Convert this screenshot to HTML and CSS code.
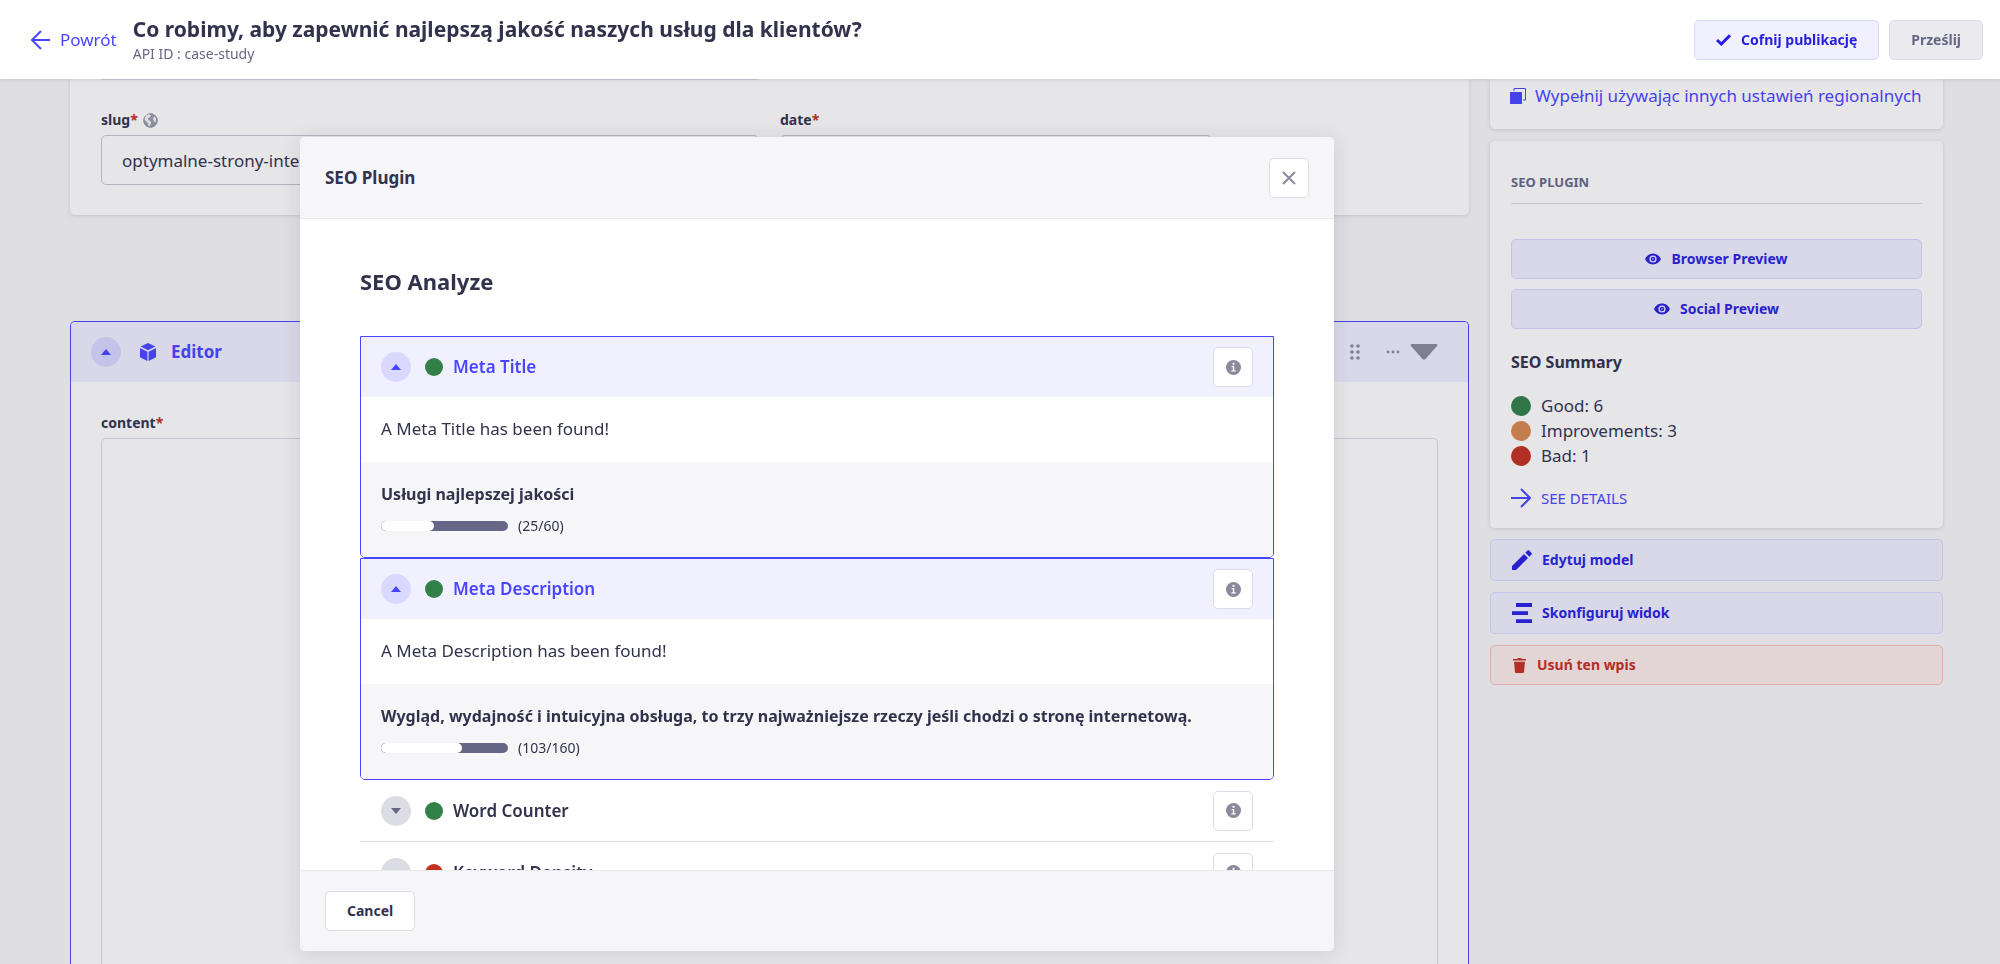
FILE: index.html
```html
<!DOCTYPE html>
<html lang="pl">
<head>
<meta charset="utf-8">
<meta name="viewport" content="width=device-width, initial-scale=1">
<title>Co robimy, aby zapewnić najlepszą jakość naszych usług dla klientów?</title>
<link rel="stylesheet" href="styles.css">
</head>
<body>
<svg class="sprite" aria-hidden="true">
  <symbol id="i-info" viewBox="0 0 16 16"><circle cx="8" cy="8" r="8" fill="#8a8a9c"/><g fill="#fff"><circle cx="8" cy="4" r="1.2"/><path d="M6 6.3h2.8v4.5h1.6v1.5H5.7v-1.5h1.6v-3H6z"/></g></symbol>
  <symbol id="i-eye" viewBox="0 0 16 12"><path fill="currentColor" fill-rule="evenodd" d="M8 0.6C4.4.6 1.400 2.800.1 6c1.300 3.200 4.300 5.400 7.900 5.400s6.600-2.200 7.900-5.400C14.600 2.800 11.600.6 8 .6zM8 9.600a3.600 3.600 0 1 1 0-7.200 3.600 3.600 0 0 1 0 7.200z"/><path fill="currentColor" fill-rule="evenodd" d="M8 3.700a2.300 2.300 0 1 0 0 4.600 2.300 2.300 0 0 0 0-4.600zm0 1.500a.8.8 0 1 1 0 1.600.8.8 0 0 1 0-1.600z"/></symbol>
  <symbol id="i-up" viewBox="0 0 10 6"><path fill="currentColor" d="M0 6 5 0l5 6z"/></symbol>
  <symbol id="i-down" viewBox="0 0 10 6"><path fill="currentColor" d="M0 0h10L5 6z"/></symbol>
</svg>

<header class="topbar">
  <a class="back" href="#"><svg width="20" height="20" viewBox="0 0 20 20" fill="none" stroke="currentColor" stroke-width="2"><path d="M20 10H2M11 1l-9 9 9 9"/></svg>Powrót</a>
  <div class="heading">
    <h1>Co robimy, aby zapewnić najlepszą jakość naszych usług dla klientów?</h1>
    <p>API ID : case-study</p>
  </div>
  <div class="topbar-actions">
    <button class="btn btn-soft" type="button"><svg width="15" height="12" viewBox="0 0 15 12" fill="none" stroke="currentColor" stroke-width="3"><path d="m1 6 4.300 4L14 1.300"/></svg>Cofnij publikację</button>
    <button class="btn btn-disabled" type="button" disabled>Prześlij</button>
  </div>
</header>

<main class="page">
  <div class="main-col">
    <section class="card fields">
      <div class="field-stub"></div>
      <div class="field-row">
        <div class="field">
          <label for="slug">slug<i>*</i><svg width="15" height="15" viewBox="0 0 15 15"><circle cx="7.500" cy="7.500" r="6.800" fill="#9a9aac" stroke="#8a8a9c"/><path fill="#f4f4f8" d="m3 2.300 3-1 2 1-1 2-2 1 .5 2 2 .6.600 2-1.600 3.400-1-.3-.5-3L2.600 8 1.500 6zM11 3l2 2.500-.3 4-1.700-1-1-2.500z"/></svg></label>
          <input id="slug" type="text" value="optymalne-strony-internetowe">
        </div>
        <div class="field field-date">
          <label for="date">date<i>*</i></label>
          <input id="date" type="text">
        </div>
      </div>
    </section>
    <section class="editor">
      <div class="editor-head">
        <button class="toggle" type="button" aria-label="Zwiń"><svg width="10" height="6"><use href="#i-up"/></svg></button>
        <svg width="16" height="18" viewBox="0 0 16 18"><path fill="currentColor" d="M8 0l7.300 3.600L8 7.200.7 3.600zM0 5l7.400 3.700V18L0 14.300zM16 5 8.600 8.700V18L16 14.300z"/></svg>
        <h2>Editor</h2>
        <div class="editor-tools">
          <svg width="10" height="16" viewBox="0 0 10 16" fill="currentColor"><circle cx="2" cy="2" r="1.800"/><circle cx="8" cy="2" r="1.800"/><circle cx="2" cy="8" r="1.800"/><circle cx="8" cy="8" r="1.800"/><circle cx="2" cy="14" r="1.800"/><circle cx="8" cy="14" r="1.800"/></svg>
          <svg class="dots" width="14" height="4" viewBox="0 0 14 4" fill="currentColor"><circle cx="2" cy="2" r="1.400"/><circle cx="7" cy="2" r="1.400"/><circle cx="12" cy="2" r="1.400"/></svg>
          <svg width="28" height="16" viewBox="0 0 28 16" fill="currentColor"><path d="M2 0h24q2 0 1 2L15.500 15q-1.500 1.500-3 0L1 2Q0 0 2 0z"/></svg>
        </div>
      </div>
      <div class="editor-body">
        <label for="content">content<i>*</i></label>
        <textarea id="content"></textarea>
      </div>
    </section>
  </div>

  <aside class="side-col">
    <section class="card locales">
      <a href="#"><svg width="16" height="16" viewBox="0 0 16 16"><path fill="currentColor" d="M0 4h12v12H0z"/><path fill="none" stroke="currentColor" d="M4 3V.5h11.500v11.500H13"/></svg>Wypełnij używając innych ustawień regionalnych</a>
    </section>
    <section class="card seo">
      <h2>SEO PLUGIN</h2>
      <button class="btn btn-soft" type="button"><svg width="16" height="12"><use href="#i-eye"/></svg>Browser Preview</button>
      <button class="btn btn-soft" type="button"><svg width="16" height="12"><use href="#i-eye"/></svg>Social Preview</button>
      <h3>SEO Summary</h3>
      <ul>
        <li><span class="disc good"></span>Good: 6</li>
        <li><span class="disc warn"></span>Improvements: 3</li>
        <li><span class="disc bad"></span>Bad: 1</li>
      </ul>
      <a class="details" href="#"><svg width="20" height="20" viewBox="0 0 20 20" fill="none" stroke="currentColor" stroke-width="2"><path d="M0 10h19M10 1l9 9-9 9"/></svg>SEE DETAILS</a>
    </section>
    <button class="btn btn-soft btn-wide" type="button"><svg width="20" height="20" viewBox="0 0 20 20" fill="currentColor"><path d="M0 16 12 4l4 4L4 20H0zM13.300 2.700 15.500.5q.8-.8 1.600 0l2.400 2.400q.8.800 0 1.600l-2.200 2.200z"/></svg>Edytuj model</button>
    <button class="btn btn-soft btn-wide" type="button"><svg width="20" height="20" viewBox="0 0 20 20" fill="currentColor"><path d="M4 0h16v4H4zM0 8.300h16v3.600H0zM4 16.300h16V20H4z"/></svg>Skonfiguruj widok</button>
    <button class="btn btn-danger" type="button"><svg width="15" height="15" viewBox="0 0 15 15" fill="currentColor"><path d="M1 1h4l1-1h3l1 1h4v1.500H1zM2 3.800h11L12 14q0 1-1 1H4q-1 0-1-1z"/></svg>Usuń ten wpis</button>
  </aside>
</main>

<div class="overlay">
  <div class="modal" role="dialog" aria-modal="true" aria-labelledby="modal-title">
    <div class="modal-head">
      <h2 id="modal-title">SEO Plugin</h2>
      <button class="icon-btn" type="button" aria-label="Zamknij"><svg width="14" height="14" viewBox="0 0 14 14" fill="none" stroke="#8a8a9c" stroke-width="2"><path d="m1 1 12 12M13 1 1 13"/></svg></button>
    </div>
    <div class="modal-body">
      <h2>SEO Analyze</h2>
      <section class="item open">
        <div class="item-head">
          <button class="toggle" type="button" aria-label="Zwiń"><svg width="10" height="6"><use href="#i-up"/></svg></button>
          <span class="dot good"></span><h3>Meta Title</h3>
          <button class="icon-btn" type="button" aria-label="Info"><svg width="15" height="15"><use href="#i-info"/></svg></button>
        </div>
        <p class="message">A Meta Title has been found!</p>
        <div class="value">
          <h4>Usługi najlepszej jakości</h4>
          <div class="meter"><div class="track"><div class="fill" style="width:42%"></div></div>(25/60)</div>
        </div>
      </section>
      <section class="item open">
        <div class="item-head">
          <button class="toggle" type="button" aria-label="Zwiń"><svg width="10" height="6"><use href="#i-up"/></svg></button>
          <span class="dot good"></span><h3>Meta Description</h3>
          <button class="icon-btn" type="button" aria-label="Info"><svg width="15" height="15"><use href="#i-info"/></svg></button>
        </div>
        <p class="message">A Meta Description has been found!</p>
        <div class="value">
          <h4>Wygląd, wydajność i intuicyjna obsługa, to trzy najważniejsze rzeczy jeśli chodzi o stronę internetową.</h4>
          <div class="meter"><div class="track"><div class="fill" style="width:64%"></div></div>(103/160)</div>
        </div>
      </section>
      <section class="item">
        <div class="item-head">
          <button class="toggle" type="button" aria-label="Rozwiń"><svg width="10" height="6"><use href="#i-down"/></svg></button>
          <span class="dot good"></span><h3>Word Counter</h3>
          <button class="icon-btn" type="button" aria-label="Info"><svg width="15" height="15"><use href="#i-info"/></svg></button>
        </div>
      </section>
      <section class="item">
        <div class="item-head">
          <button class="toggle" type="button" aria-label="Rozwiń"><svg width="10" height="6"><use href="#i-down"/></svg></button>
          <span class="dot bad"></span><h3>Keyword Density</h3>
          <button class="icon-btn" type="button" aria-label="Info"><svg width="15" height="15"><use href="#i-info"/></svg></button>
        </div>
      </section>
    </div>
    <div class="modal-foot">
      <button class="btn btn-plain" type="button">Cancel</button>
    </div>
  </div>
</div>
</body>
</html>
```

FILE: styles.css
```css
:root {
  --ink: #32324d;
  --muted: #666687;
  --line: #dcdce4;
  --primary: #4945ff;
  --primary-dark: #271fe0;
  --soft: #f0f0ff;
  --soft-line: #d9d8ff;
  --green: #328048;
  --orange: #d9884f;
  --red: #c42f20;
}

* { box-sizing: border-box; }

body {
  margin: 0;
  height: 100vh;
  overflow: hidden;
  display: flex;
  flex-direction: column;
  background: #f6f6f9;
  color: var(--ink);
  font: 17px/24px "Noto Sans", sans-serif;
}

h1, h2, h3, h4, p, ul { margin: 0; padding: 0; font-weight: 700; }
p { font-weight: 400; }
button, input, textarea { font: inherit; color: inherit; }
button { cursor: pointer; padding: 0; }
a { color: var(--primary); text-decoration: none; display: inline-flex; align-items: center; white-space: nowrap; }
svg { display: block; flex: none; }
i { font-style: normal; color: var(--red); }
.sprite { position: absolute; width: 0; height: 0; }

/* top bar */
.topbar {
  position: relative;
  z-index: 3;
  flex: none;
  display: flex;
  align-items: center;
  height: 79px;
  padding: 0 17px 0 30px;
  background: #fff;
  box-shadow: 0 1px 4px rgba(33, 33, 52, .12);
}
.back { gap: 10px; margin-right: 16px; }
.heading h1 { font-size: 21px; line-height: 28px; }
.heading p { font-size: 14px; line-height: 22px; color: var(--muted); }
.topbar-actions { display: flex; gap: 10px; margin-left: auto; }

.btn {
  display: flex;
  align-items: center;
  justify-content: center;
  gap: 10px;
  height: 40px;
  padding: 0 21px;
  border: 1px solid var(--line);
  border-radius: 5px;
  background: #fff;
  font-size: 14px;
  font-weight: 700;
}
.btn-soft { background: var(--soft); border-color: var(--soft-line); color: var(--primary-dark); }
.btn-disabled { background: #eaeaef; color: var(--muted); }
.btn-danger { justify-content: flex-start; background: #fcecea; border-color: #f5c0b8; color: var(--red); }
.btn-wide { justify-content: flex-start; height: 42px; }

/* page */
.page {
  flex: 1;
  min-height: 0;
  display: grid;
  grid-template-columns: minmax(0, 1fr) 453px;
  gap: 21px;
  padding: 0 57px 0 70px;
}
.main-col { display: flex; flex-direction: column; gap: 106px; min-height: 0; }
.card { background: #fff; border-radius: 0 0 5px 5px; box-shadow: 0 1px 4px rgba(33, 33, 52, .14); }

.fields { padding: 0 31px 30px; }
.field-stub { height: 1px; width: 658px; background: var(--line); }
.field-row { display: flex; gap: 21px; padding-top: 30px; }
.field { flex: 0 0 658px; }
.field-date { flex-basis: 432px; }
label { display: flex; align-items: center; font-size: 14px; font-weight: 700; line-height: 20px; }
label svg { margin-left: 5px; }
.field input {
  width: 100%;
  height: 50px;
  margin-top: 5px;
  padding: 0 20px;
  border: 1px solid #c8c8d0;
  border-radius: 5px;
  background: #fff;
  display: block;
}

.editor {
  flex: 1;
  display: flex;
  flex-direction: column;
  border: 1px solid var(--primary);
  border-bottom: 0;
  border-radius: 5px 5px 0 0;
  background: #fff;
  overflow: hidden;
}
.editor-head { display: flex; align-items: center; height: 60px; padding: 0 30px 0 20px; background: var(--soft); color: var(--primary); }
.editor-head h2 { font-size: 17px; margin-left: 15px; }
.toggle {
  display: grid;
  place-items: center;
  width: 30px;
  height: 30px;
  border: 0;
  border-radius: 50%;
  background: var(--line);
  color: var(--muted);
}
.editor-head .toggle, .open .toggle { background: var(--soft-line); color: var(--primary); }
.editor-head .toggle { margin-right: 19px; }
.editor-tools { display: flex; align-items: center; margin-left: auto; color: #8a8a9c; }
.dots { margin: 0 10px 0 26px; }
.editor-body { flex: 1; display: flex; flex-direction: column; gap: 5px; padding: 31px 30px 0; }
.editor-body textarea { flex: 1; border: 1px solid var(--line); border-bottom: 0; border-radius: 5px 5px 0 0; background: #fff; resize: none; }

/* side column */
.side-col { display: flex; flex-direction: column; gap: 11px; }
.locales { height: 50px; padding: 5px 20px 0; }
.locales a { gap: 9px; }
.seo { display: flex; flex-direction: column; gap: 10px; border-radius: 5px; margin-top: 1px; padding: 29px 21px 18px; }
.seo h2 { font-size: 13px; line-height: 24px; color: var(--muted); padding-bottom: 9px; margin-bottom: 25px; border-bottom: 1px solid var(--line); }
.seo h3 { font-size: 16px; margin: 11px 0 9px; }
.seo ul { list-style: none; }
.seo li { display: flex; align-items: center; gap: 10px; height: 25px; font-weight: 400; }
.disc { width: 20px; height: 20px; border-radius: 50%; }
.details { gap: 10px; font-size: 15px; margin-top: 8px; }
.good { background: var(--green); }
.warn { background: var(--orange); }
.bad { background: var(--red); }

/* modal */
.overlay {
  position: fixed;
  inset: 79px 0 0;
  z-index: 2;
  padding: 58px 0 13px 300px;
  background: rgba(50, 50, 77, .12);
}
.modal {
  display: flex;
  flex-direction: column;
  width: 1034px;
  max-width: 100%;
  height: 100%;
  border-radius: 5px;
  background: #fff;
  overflow: hidden;
  box-shadow: 0 2px 20px rgba(33, 33, 52, .12);
}
.modal-head, .modal-foot { flex: none; display: flex; align-items: center; padding: 0 25px; background: #f6f6f9; }
.modal-head { justify-content: space-between; height: 82px; border-bottom: 1px solid #eaeaef; }
.modal-head h2 { font-size: 17px; }
.modal-foot { height: 81px; border-top: 1px solid #eaeaef; }
.modal-body { flex: 1; min-height: 0; overflow: hidden; padding: 47px 60px 0; }
.modal-body > h2 { font-size: 22px; line-height: 30px; margin-bottom: 40px; }
.icon-btn {
  display: grid;
  place-items: center;
  width: 40px;
  height: 40px;
  border: 1px solid var(--line);
  border-radius: 5px;
  background: #fff;
}
.item { border-bottom: 1px solid var(--line); }
.item.open { border: 1px solid var(--primary); border-radius: 0 0 5px 5px; overflow: hidden; }
.item-head { display: flex; align-items: center; height: 61px; padding: 0 21px; }
.open .item-head { height: 60px; padding: 0 20px; background: var(--soft); color: var(--primary); }
.item-head h3 { font-size: 17px; font-weight: 600; }
.item-head .icon-btn { margin-left: auto; }
.dot { width: 18px; height: 18px; border-radius: 50%; margin: 0 10px 0 14px; }
.message { padding: 20px 20px 21px; }
.value { padding: 20px 20px 19px; background: #f6f6f9; }
.value h4 { font-size: 16px; }
.meter { display: flex; align-items: center; gap: 10px; margin-top: 8px; font-size: 14px; }
.track { width: 127px; height: 10px; border-radius: 5px; background: var(--muted); overflow: hidden; }
.fill { height: 10px; border-radius: 5px; background: #fff; }
```
